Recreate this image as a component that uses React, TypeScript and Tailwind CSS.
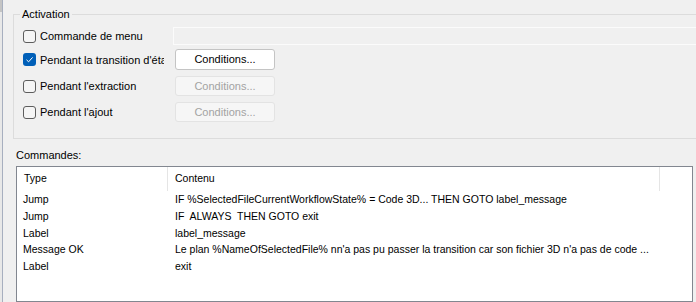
import React from "react"

const rows = [
  { type: "Jump", content: "IF %SelectedFileCurrentWorkflowState% = Code 3D... THEN GOTO label_message" },
  { type: "Jump", content: "IF  ALWAYS  THEN GOTO exit" },
  { type: "Label", content: "label_message" },
  { type: "Message OK", content: "Le plan %NameOfSelectedFile% nn'a pas pu passer la transition car son fichier 3D n'a pas de code ..." },
  { type: "Label", content: "exit" },
]

const CheckBox = ({ checked }: { checked?: boolean }) =>
  checked ? (
    <span className="flex h-[13px] w-[13px] shrink-0 items-center justify-center rounded-[3px] bg-[#005fb8]">
      <svg width="9" height="9" viewBox="0 0 9 9">
        <path d="M1.5 4.8 L3.6 6.8 L7.6 2.4" fill="none" stroke="white" strokeWidth="1" />
      </svg>
    </span>
  ) : (
    <span className="h-[13px] w-[13px] shrink-0 rounded-[3px] border border-[#5d5d5d] bg-[#f5f5f5]" />
  )

const CondButton = ({ disabled }: { disabled?: boolean }) => (
  <button
    className={
      disabled
        ? "ml-[11px] h-[20px] w-[100px] rounded-[3px] border border-[#e3e3e3] bg-[#f6f6f6] text-[11px] text-[#a3a3a3]"
        : "ml-[11px] h-[21px] w-[100px] rounded-[3px] border border-[#c4c4c4] bg-white text-[11px] text-black"
    }
  >
    Conditions...
  </button>
)

const Option = ({ label, checked }: { label: string; checked?: boolean }) => (
  <div className="flex w-[141px] shrink-0 items-center gap-[4px]">
    <CheckBox checked={checked} />
    <span className="w-[124px] overflow-hidden whitespace-nowrap text-[11px] leading-[14px] text-black">
      {label}
    </span>
  </div>
)

export default function App() {
  return (
    <div
      className="flex h-[302px] w-[696px] overflow-hidden bg-[#f0f0f0]"
      style={{ fontFamily: '"Liberation Sans", Arial, sans-serif' }}
    >
      {/* window edge */}
      <div className="flex w-[3px] shrink-0 flex-col border-r border-[#a7afbf] bg-[#e8e8e8]">
        <div className="h-[12px] bg-[#c4c4c4]" />
      </div>

      <div className="flex min-w-0 flex-1 flex-col overflow-hidden">
        {/* === Activation group === */}
        <fieldset className="ml-[10px] mt-[7px] w-[720px] shrink-0 border border-[#dcdcdc] pb-[16px] pl-[9px]">
          <legend className="ml-[-3px] px-[2px] text-[11px] leading-[14px] text-black">Activation</legend>

          <div className="mt-[6px] flex h-[18px] items-center">
            <Option label="Commande de menu" />
            <div className="ml-[9px] h-[18px] flex-1 border border-[#fbfbfb] bg-[#f0f0f0]" />
          </div>
          <div className="mt-[4px] flex h-[21px] items-center">
            <Option label="Pendant la transition d'état" checked />
            <CondButton />
          </div>
          <div className="mt-[6px] flex h-[20px] items-center">
            <Option label="Pendant l'extraction" />
            <CondButton disabled />
          </div>
          <div className="mt-[6px] flex h-[20px] items-center">
            <Option label="Pendant l'ajout" />
            <CondButton disabled />
          </div>
        </fieldset>

        {/* === Commands list === */}
        <div className="ml-[13px] mt-[9px] text-[11px] leading-[14px] text-black">Commandes:</div>
        <div className="ml-[13px] mt-[4px] flex w-[677px] flex-1 flex-col border border-[#828790] bg-white text-[10.5px] text-black">
          <div className="flex h-[24px] items-center">
            <div className="w-[150px] pl-[7px]">Type</div>
            <div className="h-full w-px bg-[#e5e5e5]" />
            <div className="w-[491px] pl-[7px]">Contenu</div>
            <div className="h-full w-px bg-[#e5e5e5]" />
          </div>
          <div className="mt-[1px] flex flex-col">
            {rows.map((r, i) => (
              <div key={i} className="flex h-[16.67px] items-center whitespace-pre">
                <div className="w-[151px] pl-[6px]">{r.type}</div>
                <div className="pl-[7px]">{r.content}</div>
              </div>
            ))}
          </div>
        </div>
      </div>
    </div>
  )
}
